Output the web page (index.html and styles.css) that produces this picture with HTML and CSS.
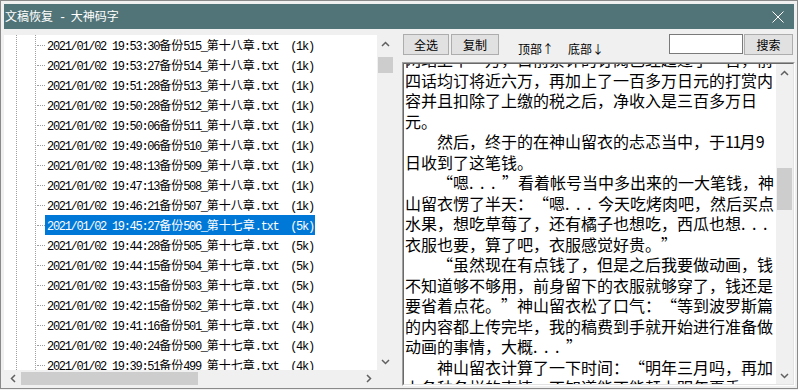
FILE: index.html
```html
<!DOCTYPE html>
<html lang="zh-CN">
<head>
<meta charset="utf-8">
<title>文稿恢复 - 大神码字</title>
<link rel="stylesheet" href="styles.css">
</head>
<body>
<div class="window">
  <div class="titlebar">
    <span class="title">文稿恢复<span class="a"> - </span>大神码字</span>
    <svg class="close" width="12" height="12" viewBox="0 0 12 12"><path d="M0.5 0.5 L11.5 11.5 M11.5 0.5 L0.5 11.5" stroke="#fff" stroke-width="1" fill="none"/></svg>
  </div>
  <div class="main">
    <div class="left">
      <div class="tree">
        <div class="row"><span class="lbl"><span class="a">2021/01/02 19:53:30</span>备份<span class="a">515_</span>第十八章<span class="a">.txt  (1k)</span></span></div>
        <div class="row"><span class="lbl"><span class="a">2021/01/02 19:53:27</span>备份<span class="a">514_</span>第十八章<span class="a">.txt  (1k)</span></span></div>
        <div class="row"><span class="lbl"><span class="a">2021/01/02 19:51:28</span>备份<span class="a">513_</span>第十八章<span class="a">.txt  (1k)</span></span></div>
        <div class="row"><span class="lbl"><span class="a">2021/01/02 19:50:28</span>备份<span class="a">512_</span>第十八章<span class="a">.txt  (1k)</span></span></div>
        <div class="row"><span class="lbl"><span class="a">2021/01/02 19:50:06</span>备份<span class="a">511_</span>第十八章<span class="a">.txt  (1k)</span></span></div>
        <div class="row"><span class="lbl"><span class="a">2021/01/02 19:49:06</span>备份<span class="a">510_</span>第十八章<span class="a">.txt  (1k)</span></span></div>
        <div class="row"><span class="lbl"><span class="a">2021/01/02 19:48:13</span>备份<span class="a">509_</span>第十八章<span class="a">.txt  (1k)</span></span></div>
        <div class="row"><span class="lbl"><span class="a">2021/01/02 19:47:13</span>备份<span class="a">508_</span>第十八章<span class="a">.txt  (1k)</span></span></div>
        <div class="row"><span class="lbl"><span class="a">2021/01/02 19:46:21</span>备份<span class="a">507_</span>第十八章<span class="a">.txt  (1k)</span></span></div>
        <div class="row sel"><span class="lbl"><span class="a">2021/01/02 19:45:27</span>备份<span class="a">506_</span>第十七章<span class="a">.txt  (5k)</span></span></div>
        <div class="row"><span class="lbl"><span class="a">2021/01/02 19:44:28</span>备份<span class="a">505_</span>第十七章<span class="a">.txt  (5k)</span></span></div>
        <div class="row"><span class="lbl"><span class="a">2021/01/02 19:44:15</span>备份<span class="a">504_</span>第十七章<span class="a">.txt  (5k)</span></span></div>
        <div class="row"><span class="lbl"><span class="a">2021/01/02 19:43:15</span>备份<span class="a">503_</span>第十七章<span class="a">.txt  (5k)</span></span></div>
        <div class="row"><span class="lbl"><span class="a">2021/01/02 19:42:15</span>备份<span class="a">502_</span>第十七章<span class="a">.txt  (4k)</span></span></div>
        <div class="row"><span class="lbl"><span class="a">2021/01/02 19:41:16</span>备份<span class="a">501_</span>第十七章<span class="a">.txt  (4k)</span></span></div>
        <div class="row"><span class="lbl"><span class="a">2021/01/02 19:40:24</span>备份<span class="a">500_</span>第十七章<span class="a">.txt  (4k)</span></span></div>
        <div class="row"><span class="lbl"><span class="a">2021/01/02 19:39:51</span>备份<span class="a">499_</span>第十七章<span class="a">.txt  (4k)</span></span></div>
      </div>
      <div class="vscroll">
        <div class="arrow"><svg width="9" height="6" viewBox="0 0 9 6"><path d="M1 5 L4.5 1.5 L8 5" stroke="#606060" stroke-width="1.5" fill="none"/></svg></div>
        <div class="thumb-v small"></div>
        <div class="fill"></div>
        <div class="arrow"><svg width="9" height="6" viewBox="0 0 9 6"><path d="M1 1 L4.5 4.5 L8 1" stroke="#606060" stroke-width="1.5" fill="none"/></svg></div>
      </div>
      <div class="hscroll">
        <div class="arrow"><svg width="6" height="9" viewBox="0 0 6 9"><path d="M5 1 L1.5 4.5 L5 8" stroke="#606060" stroke-width="1.5" fill="none"/></svg></div>
        <div class="thumb-h"></div>
        <div class="fill"></div>
        <div class="arrow"><svg width="6" height="9" viewBox="0 0 6 9"><path d="M1 1 L4.5 4.5 L1 8" stroke="#606060" stroke-width="1.5" fill="none"/></svg></div>
      </div>
      <div class="corner"></div>
    </div>
    <div class="right">
      <div class="toolbar">
        <div class="btn b1">全选</div>
        <div class="btn b2">复制</div>
        <div class="link l1">顶部↑</div>
        <div class="link l2">底部↓</div>
        <div class="spacer"></div>
        <div class="search"></div>
        <div class="btn b3">搜索</div>
      </div>
      <div class="textbox">
        <div class="textbox-in">
          <div class="text">
            <div class="text-inner">网站上十一万，目前累计的订阅已经超过了一百，前<br>四话均订将近六万，再加上了一百多万日元的打赏内<br>容并且扣除了上缴的税之后，净收入是三百多万日<br>元。<br>　　然后，终于的在神山留衣的忐忑当中，于<span class="num">11</span>月<span class="num">9</span><br>日收到了这笔钱。<br>　　<span class="qo">“</span>嗯<span class="dots">...</span><span class="qc">”</span>看着帐号当中多出来的一大笔钱，神<br>山留衣愣了半天：<span class="qo">“</span>嗯<span class="dots">...</span>今天吃烤肉吧，然后买点<br>水果，想吃草莓了，还有橘子也想吃，西瓜也想<span class="dots">...</span><br>衣服也要，算了吧，衣服感觉好贵。<span class="qc">”</span><br>　　<span class="qo">“</span>虽然现在有点钱了，但是之后我要做动画，钱<br>不知道够不够用，前身留下的衣服就够穿了，钱还是<br>要省着点花。<span class="qc">”</span>神山留衣松了口气：<span class="qo">“</span>等到波罗斯篇<br>的内容都上传完毕，我的稿费到手就开始进行准备做<br>动画的事情，大概<span class="dots">...</span><span class="qc">”</span><br>　　神山留衣计算了一下时间：<span class="qo">“</span>明年三月吗，再加<br>上各种各样的事情，不知道能不能赶上明年夏季</div>
          </div>
          <div class="tscroll">
            <div class="arrow"><svg width="9" height="6" viewBox="0 0 9 6"><path d="M1 5 L4.5 1.5 L8 5" stroke="#606060" stroke-width="1.5" fill="none"/></svg></div>
            <div class="thumb-v big"></div>
            <div class="fill"></div>
            <div class="arrow"><svg width="9" height="6" viewBox="0 0 9 6"><path d="M1 1 L4.5 4.5 L8 1" stroke="#606060" stroke-width="1.5" fill="none"/></svg></div>
          </div>
        </div>
      </div>
    </div>
  </div>
</div>
</body>
</html>
```
FILE: styles.css
```css
* { box-sizing: border-box; }
html, body { margin: 0; padding: 0; }
body {
  width: 798px;
  height: 390px;
  overflow: hidden;
  background: #f0f0f0;
  font-family: "Noto Sans CJK SC", "Noto Sans", sans-serif;
  color: #000;
}
.window {
  width: 798px;
  height: 389px;
  border: 1px solid #8a8a8a;
  padding: 3px 3px 0 3px;
  background: #f0f0f0;
  display: flex;
  flex-direction: column;
}
.titlebar {
  height: 25px;
  flex: none;
  background: #517478;
  color: #fff;
  display: flex;
  align-items: center;
  justify-content: space-between;
  padding: 0 10px 0 1px;
  font-size: 12px;
}
.title { line-height: 16px; white-space: pre; }
.close { display: block; }
.main {
  flex: 1;
  min-height: 0;
  display: flex;
  gap: 8px;
  padding-top: 5px;
}
.left {
  width: 390px;
  flex: none;
  margin-top: 1px;
  display: grid;
  grid-template-columns: 373px 17px;
  grid-template-rows: 335px 17px;
}
.tree {
  overflow: hidden;
  background-color: #fff;
  background-image:
    repeating-linear-gradient(to bottom, #a0a0a0 0 1px, transparent 1px 2px),
    repeating-linear-gradient(to bottom, #a0a0a0 0 1px, transparent 1px 2px);
  background-size: 1px 100%, 1px 100%;
  background-position: 12px 0, 31px 0;
  background-repeat: no-repeat;
}
.row {
  height: 20px;
  display: flex;
  align-items: center;
  padding-left: 33px;
}
.row::before {
  content: "";
  width: 8px;
  height: 0;
  border-top: 1px dotted #a0a0a0;
  flex: none;
}
.lbl {
  display: block;
  width: 270px;
  flex: none;
  height: 20px;
  line-height: 20px;
  padding-left: 2px;
  font-size: 12px;
  white-space: pre;
  overflow: visible;
  color: #000;
}
.sel .lbl { background: #0078d7; color: #fff; }
.a {
  font-family: "Liberation Mono", monospace;
  letter-spacing: -1.3px;
}
.vscroll, .tscroll {
  background: #f0f0f0;
  display: flex;
  flex-direction: column;
  align-items: center;
}
.tscroll { width: 17px; flex: none; }
.arrow {
  width: 17px;
  height: 17px;
  flex: none;
  display: flex;
  align-items: center;
  justify-content: center;
}
.arrow svg { display: block; }
.fill { flex: 1; }
.thumb-v { width: 15px; background: #cdcdcd; flex: none; }
.thumb-v.small { margin-top: 5px; height: 16px; }
.thumb-v.big { margin-top: 87px; height: 42px; }
.hscroll {
  background: #f0f0f0;
  display: flex;
  align-items: center;
}
.thumb-h { width: 177px; height: 13px; background: #cdcdcd; flex: none; }
.corner { background: #f0f0f0; }
.right {
  flex: 1;
  min-width: 0;
  display: flex;
  flex-direction: column;
}
.toolbar {
  height: 21px;
  flex: none;
  display: flex;
  align-items: flex-start;
  padding: 0 1px;
}
.btn {
  height: 21px;
  border: 1px solid #adadad;
  background: #e1e1e1;
  font-size: 12px;
  display: flex;
  align-items: center;
  justify-content: center;
  flex: none;
}
.b1 { width: 46px; }
.b2 { width: 48px; margin-left: 2px; }
.b3 { width: 49px; margin-left: 1px; }
.link {
  font-size: 12px;
  line-height: 14px;
  margin-top: 8px;
  flex: none;
}
.l1 { margin-left: 19px; }
.l2 { margin-left: 14px; }
.spacer { flex: 1; }
.search {
  width: 74px;
  height: 20px;
  border: 1px solid #7a7a7a;
  background: #fff;
  flex: none;
}
.textbox {
  margin-top: 7px;
  margin-right: -1px;
  height: 324px;
  flex: none;
  border: 1px solid;
  border-color: #a0a0a0 #ffffff #ffffff #a0a0a0;
}
.textbox-in {
  height: 100%;
  border: 1px solid;
  border-color: #696969 #e3e3e3 #e3e3e3 #696969;
  background: #fff;
  display: flex;
}
.text {
  flex: 1;
  min-width: 0;
  overflow: hidden;
  padding-left: 1px;
  font-size: 16px;
  line-height: 20.5px;
}
.text-inner {
  margin-top: -15px;
  white-space: nowrap;
}
.qo, .qc {
  display: inline-block;
  width: 16px;
}
.qo { text-align: right; }
.qc { text-align: left; }
.dots { letter-spacing: 6.5px; }
.num { letter-spacing: -1.5px; }
```
